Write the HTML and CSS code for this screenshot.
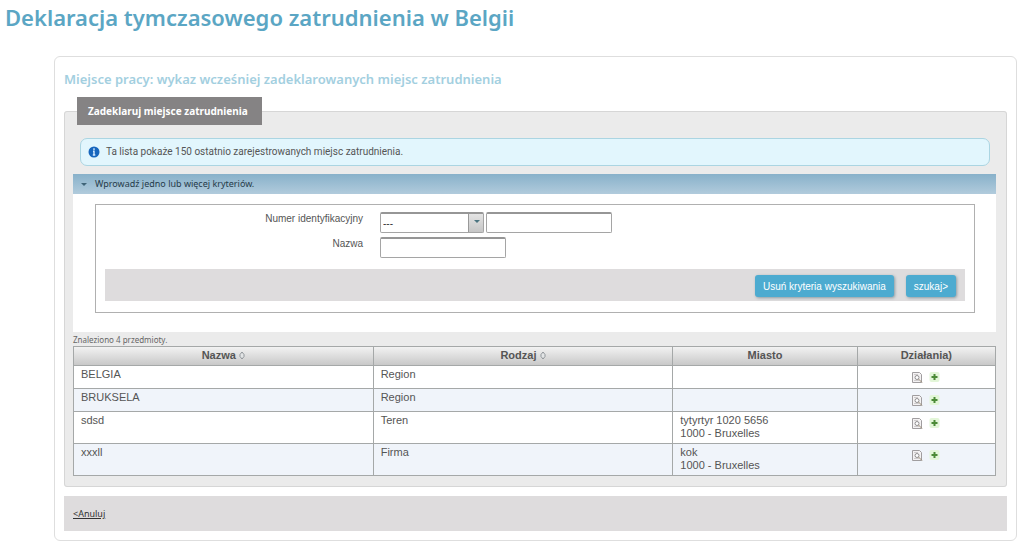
FILE: index.html
```html
<!DOCTYPE html>
<html lang="pl">
<head>
<meta charset="utf-8">
<meta name="viewport" content="width=device-width, initial-scale=1">
<title>Deklaracja tymczasowego zatrudnienia w Belgii</title>
<link rel="stylesheet" href="styles.css">
</head>
<body>
<svg class="sprite" aria-hidden="true">
  <symbol id="icon-view" viewBox="0 0 11 12">
    <path d="M.5 1.500h7l2 2v8h-9z" fill="#f4f2f3" stroke="#a09d9f"/>
    <path d="M2 3.500h4M2 9.500h5" stroke="#cfcccd"/>
    <circle cx="5" cy="6.500" r="2" fill="#fff" stroke="#918e90"/>
    <path d="M6.500 8l3.500 3.500" stroke="#9a8c74"/>
  </symbol>
  <symbol id="icon-add" viewBox="0 0 11 12">
    <rect x=".5" y="1" width="10" height="10" rx="2" fill="#e3f6d8"/>
    <path d="M5.500 3v6M2.500 6h6" stroke="#4b8a36" stroke-width="2"/>
  </symbol>
  <symbol id="icon-sort" viewBox="0 0 6 9">
    <path d="M1 3.500L3 1l2 2.500v2L3 8 1 5.500z" fill="#e3e5e6" stroke="#7c8388" stroke-width=".8"/>
  </symbol>
</svg>

<h1 class="page-title">Deklaracja tymczasowego zatrudnienia w Belgii</h1>

<main class="card">
  <h2 class="card-title">Miejsce pracy: wykaz wcześniej zadeklarowanych miejsc zatrudnienia</h2>

  <fieldset class="panel">
    <legend class="panel-legend">Zadeklaruj miejsce zatrudnienia</legend>

    <div class="notice">
      <svg class="notice-icon" viewBox="0 0 12 12" aria-hidden="true">
        <circle cx="6" cy="6" r="5.500" fill="#1766bd"/>
        <path d="M6 2.300v1.600M5 5.200h1v3.500M4.800 9h2.500" fill="none" stroke="#d4eaff" stroke-width="1.400"/>
      </svg>
      <span>Ta lista pokaże 150 ostatnio zarejestrowanych miejsc zatrudnienia.</span>
    </div>

    <button class="accordion" type="button" aria-expanded="true"><span class="caret"></span>Wprowadź jedno lub więcej kryteriów.</button>
    <div class="criteria">
      <form class="search">
        <div class="field">
          <label class="field-label" for="id-type">Numer identyfikacyjny</label>
          <div class="field-controls">
            <span class="select-wrap">
              <select class="select" id="id-type"><option>---</option></select>
            </span>
            <input class="text-box" type="text" aria-label="Numer identyfikacyjny">
          </div>
        </div>
        <div class="field">
          <label class="field-label" for="name">Nazwa</label>
          <div class="field-controls">
            <input class="text-box" id="name" type="text">
          </div>
        </div>
        <div class="actions">
          <button class="button" type="button">Usuń kryteria wyszukiwania</button>
          <button class="button" type="button">szukaj&gt;</button>
        </div>
      </form>
    </div>

    <p class="result-count">Znaleziono 4 przedmioty.</p>
    <table class="results">
      <colgroup><col class="col-wide"><col class="col-wide"><col class="col-city"><col class="col-actions"></colgroup>
      <thead>
        <tr>
          <th>Nazwa <svg class="sort"><use href="#icon-sort"/></svg></th>
          <th>Rodzaj <svg class="sort"><use href="#icon-sort"/></svg></th>
          <th>Miasto</th>
          <th>Działania)</th>
        </tr>
      </thead>
      <tbody>
        <tr>
          <td>BELGIA</td><td>Region</td><td></td>
          <td class="row-actions"><button class="icon-button" type="button" aria-label="Pokaż"><svg class="icon"><use href="#icon-view"/></svg></button><button class="icon-button" type="button" aria-label="Dodaj"><svg class="icon"><use href="#icon-add"/></svg></button></td>
        </tr>
        <tr>
          <td>BRUKSELA</td><td>Region</td><td></td>
          <td class="row-actions"><button class="icon-button" type="button" aria-label="Pokaż"><svg class="icon"><use href="#icon-view"/></svg></button><button class="icon-button" type="button" aria-label="Dodaj"><svg class="icon"><use href="#icon-add"/></svg></button></td>
        </tr>
        <tr>
          <td>sdsd</td><td>Teren</td><td>tytyrtyr 1020 5656<br>1000 - Bruxelles</td>
          <td class="row-actions"><button class="icon-button" type="button" aria-label="Pokaż"><svg class="icon"><use href="#icon-view"/></svg></button><button class="icon-button" type="button" aria-label="Dodaj"><svg class="icon"><use href="#icon-add"/></svg></button></td>
        </tr>
        <tr>
          <td>xxxll</td><td>Firma</td><td>kok<br>1000 - Bruxelles</td>
          <td class="row-actions"><button class="icon-button" type="button" aria-label="Pokaż"><svg class="icon"><use href="#icon-view"/></svg></button><button class="icon-button" type="button" aria-label="Dodaj"><svg class="icon"><use href="#icon-add"/></svg></button></td>
        </tr>
      </tbody>
    </table>
  </fieldset>

  <div class="footer-bar"><a class="cancel" href="#">&lt;Anuluj</a></div>
</main>
</body>
</html>
```
FILE: styles.css
```css
* { box-sizing: border-box; }

body {
  margin: 0;
  padding: 0 6px 12px 5px;
  background: #fff;
  color: #555;
  font: 11px/13px "Liberation Sans", Arial, sans-serif;
}

.sprite { display: none; }

.page-title {
  margin: 0 0 22px;
  color: #5ba6c4;
  font: 600 22px/34px "Noto Sans", sans-serif;
}

.card {
  margin-left: 49px;
  padding: 14px 9px 9px;
  border: 1px solid #dedede;
  border-radius: 6px;
}

.card-title {
  margin: 0 0 9px;
  color: #a3cfdf;
  font: 600 13px/17px "Noto Sans", sans-serif;
}

.panel {
  min-width: 0;
  margin: 0;
  padding: 13px 10px 10px 8px;
  border: 1px solid #d6d6d6;
  border-radius: 3px;
  background: #ebebeb;
}

.panel-legend {
  margin-left: 4px;
  padding: 0 14px 0 11px;
  background: #858384;
  color: #fff;
  font: 700 10px/28px "Noto Sans", sans-serif;
}

.notice {
  display: flex;
  align-items: center;
  gap: 6px;
  height: 28px;
  margin: 0 6px 8px 7px;
  padding: 0 7px;
  border: 1px solid #abd5e2;
  border-radius: 7px;
  background: #e2f6fd;
  font: 10px/14px Roboto, sans-serif;
}

.notice-icon { width: 12px; height: 12px; }

.accordion {
  display: flex;
  align-items: center;
  width: 100%;
  height: 20px;
  padding: 0 8px;
  gap: 8px;
  border: 0;
  background: linear-gradient(#88b1ca, #b1cbdc);
  color: #263b49;
  font: 9px/14px "Noto Sans", sans-serif;
}

.caret {
  border: 3px solid transparent;
  border-top-color: #3f6478;
  border-bottom: 0;
}

.criteria {
  padding: 10px 21px 19px 22px;
  background: #fff;
}

.search {
  padding: 7px 9px 11px;
  border: 1px solid #b0b0b0;
}

.field {
  display: grid;
  grid-template-columns: 30% 1fr;
  column-gap: 17px;
  margin-bottom: 4px;
  font-size: 10px;
}

.field-label { text-align: right; }

.field-controls { display: flex; gap: 2px; }

.select-wrap { position: relative; }

.select-wrap::after {
  content: "";
  position: absolute;
  top: 8px;
  right: 4px;
  border: 3px solid transparent;
  border-top-color: #4b7480;
  border-bottom: 0;
  pointer-events: none;
}

.select,
.text-box {
  display: block;
  height: 21px;
  border: 1px solid #a5a5a5;
  border-top: 2px solid #969696;
  border-radius: 2px;
  background: #fff;
  color: #333;
  font: 10px/13px "Liberation Sans", Arial, sans-serif;
}

.select {
  appearance: none;
  width: 104px;
  padding: 0 18px 0 2px;
  background: linear-gradient(90deg, #999 1px, transparent 1px) right / 15px 100% no-repeat, linear-gradient(#e4e4e4, #c6c6c6) right / 15px 100% no-repeat, #fff;
}

.text-box { width: 126px; padding: 0 3px; }

.actions {
  display: flex;
  justify-content: flex-end;
  gap: 12px;
  margin-top: 11px;
  padding: 6px 9px 4px;
  background: #dedcdd;
}

.button {
  height: 22px;
  padding: 0 8px;
  border: 0;
  border-radius: 3px;
  background: #4dabd0;
  box-shadow: 1px 1px 3px #8a9ba3;
  color: #fff;
  font: 10px/13px "Liberation Sans", Arial, sans-serif;
}

.result-count {
  margin: 1px 0 0;
  color: #666;
  font: 8px/13px "Noto Sans", sans-serif;
}

.results {
  width: 100%;
  table-layout: fixed;
  border-collapse: collapse;
  background: #fff;
}

.col-wide { width: 26%; }
.col-city { width: 16%; }
.col-actions { width: 12%; }

.results th,
.results td {
  border: 1px solid #a5a8a8;
  vertical-align: top;
}

.results thead tr { background: linear-gradient(#f2f2f2, #c6c6c6); }
.results th { height: 19px; padding: 2px 7px; }
.results td { height: 23px; padding: 2px 7px 3px; text-align: left; }
.results tbody tr:nth-child(even) { background: #f0f4fa; }
.results tbody td.row-actions { padding: 5px 7px 0; text-align: center; }

.sort { width: 6px; height: 9px; vertical-align: -1px; }

.icon-button {
  margin: 0 3px;
  padding: 0;
  border: 0;
  background: none;
}

.icon { display: block; width: 11px; height: 12px; }

.footer-bar {
  margin-top: 9px;
  padding: 11px 9px;
  background: #dedcdd;
}

.cancel { color: #333; font: 9px/13px "Noto Sans", sans-serif; }
```
